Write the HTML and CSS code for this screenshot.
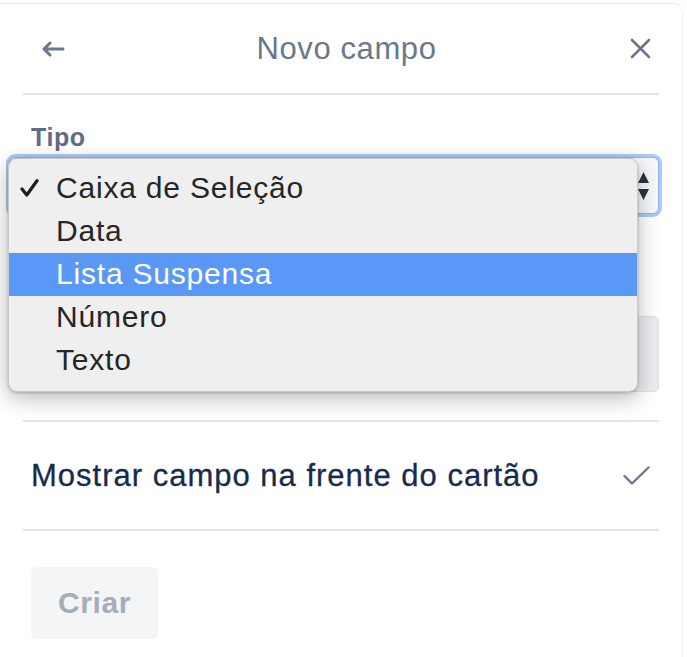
FILE: index.html
```html
<!DOCTYPE html>
<html lang="pt">
<head>
<meta charset="utf-8">
<title>Novo campo</title>
<link rel="stylesheet" href="styles.css">
</head>
<body>
<div class="page">
  <div class="card">
    <header class="header">
      <button class="icon-btn" aria-label="Voltar">
        <svg width="24" height="16" viewBox="0 0 24 16"><path d="M22 8H3M9 2L3 8l6 6" fill="none" stroke="#6b778c" stroke-width="3" stroke-linecap="round" stroke-linejoin="round"/></svg>
      </button>
      <h1 class="title">Novo campo</h1>
      <button class="icon-btn" aria-label="Fechar">
        <svg width="21" height="21" viewBox="0 0 21 21"><path d="M2 2l17 17M19 2L2 19" fill="none" stroke="#6b778c" stroke-width="2.6" stroke-linecap="round"/></svg>
      </button>
    </header>
    <div class="divider"></div>
    <section class="form">
      <label class="label">Tipo</label>
      <div class="select">
        <svg class="stepper" width="13" height="32" viewBox="0 0 13 32"><path d="M6.5 2L12 13H1Z M6.5 30L12 19H1Z" fill="#2b3440"/></svg>
      </div>
      <div class="spacer"></div>
      <div class="input"></div>
    </section>
    <div class="divider"></div>
    <div class="toggle-row">
      <span class="toggle-text">Mostrar campo na frente do cartão</span>
      <svg width="27" height="19" viewBox="0 0 27 19"><path d="M1.5 10l7.5 7.5L25.5 1.5" fill="none" stroke="#6b778c" stroke-width="2.4" stroke-linecap="round" stroke-linejoin="round"/></svg>
    </div>
    <div class="divider"></div>
    <div class="actions">
      <button class="btn-create">Criar</button>
    </div>
  </div>

  <ul class="menu">
    <li class="menu-item"><svg class="check" width="19" height="18" viewBox="0 0 19 18"><path d="M2 10l4.8 6L17 1.8" fill="none" stroke="#1e1e1e" stroke-width="3.2" stroke-linecap="round" stroke-linejoin="round"/></svg>Caixa de Seleção</li>
    <li class="menu-item">Data</li>
    <li class="menu-item active">Lista Suspensa</li>
    <li class="menu-item">Número</li>
    <li class="menu-item">Texto</li>
  </ul>
</div>
</body>
</html>
```

FILE: styles.css
```css
* { box-sizing: border-box; }
html, body { margin: 0; padding: 0; background: #ffffff; }
body { font-family: "Liberation Sans", Arial, sans-serif; }

.page {
  position: relative;
  width: 687px;
  height: 657px;
  overflow: hidden;
}

.card {
  margin-top: 3px;
  margin-right: 4px;
  border-top: 1px solid #ececec;
  border-right: 1px solid #f2f2f2;
  border-top-right-radius: 10px;
  padding: 0 23px 0 23px;
  background: #fff;
}

.header {
  height: 89px;
  display: flex;
  align-items: center;
  justify-content: space-between;
  padding: 0 8px 0 18px;
}

.icon-btn {
  border: 0;
  background: none;
  padding: 0;
  display: flex;
  align-items: center;
}

.title {
  margin: 0;
  font-size: 31px;
  font-weight: 400;
  color: #6b778c;
  letter-spacing: 0.6px;
  padding-right: 2px;
}

.divider {
  height: 2px;
  background: #e4e6ea;
}

.form {
  padding: 27px 0 28px 8px;
  display: flex;
  flex-direction: column;
}

.label {
  font-size: 25px;
  font-weight: 700;
  color: #5e6c84;
  line-height: 30px;
  letter-spacing: 0.6px;
}

.select {
  margin-top: 5px;
  margin-left: -22px;
  height: 57px;
  border: 1px solid #8fb4ef;
  border-radius: 6px;
  box-shadow: 0 0 0 3px rgba(104, 158, 240, 0.55);
  background: #f7f8f9;
  display: flex;
  align-items: center;
  justify-content: flex-end;
  padding: 0 8px 0 30px;
}

.spacer {
  height: 102px;
}

.input {
  height: 76px;
  background: #ebecf0;
  border: 1px solid #dfe1e6;
  border-radius: 5px;
}

.toggle-row {
  height: 107px;
  display: flex;
  align-items: center;
  justify-content: space-between;
  padding: 0 9px 0 8px;
}

.toggle-text {
  font-size: 31px;
  color: #172b4d;
  letter-spacing: 1px;
  -webkit-text-stroke: 0.3px #172b4d;
}

.actions {
  padding: 36px 0 0 8px;
  height: 130px;
}

.btn-create {
  width: 127px;
  height: 72px;
  border: 0;
  border-radius: 6px;
  background: #f4f5f7;
  color: #a5adba;
  font-family: "Liberation Sans", Arial, sans-serif;
  font-size: 30px;
  font-weight: 700;
  letter-spacing: 0.6px;
}

.menu {
  position: absolute;
  left: 8px;
  top: 158px;
  width: 630px;
  margin: 0;
  padding: 8px 0 9px 0;
  list-style: none;
  background: #efefef;
  border: 1px solid #c9c9c9;
  border-radius: 9px;
  box-shadow: 0 6px 22px rgba(0, 0, 0, 0.28), 0 1px 3px rgba(0, 0, 0, 0.2);
}

.menu-item {
  position: relative;
  height: 43px;
  display: flex;
  align-items: center;
  padding-left: 47px;
  padding-bottom: 2px;
  font-size: 30px;
  color: #262626;
  letter-spacing: 0.8px;
}

.menu-item.active {
  background: #5a98f7;
  color: #ffffff;
}

.check {
  position: absolute;
  left: 11px;
  top: 12px;
}
```
